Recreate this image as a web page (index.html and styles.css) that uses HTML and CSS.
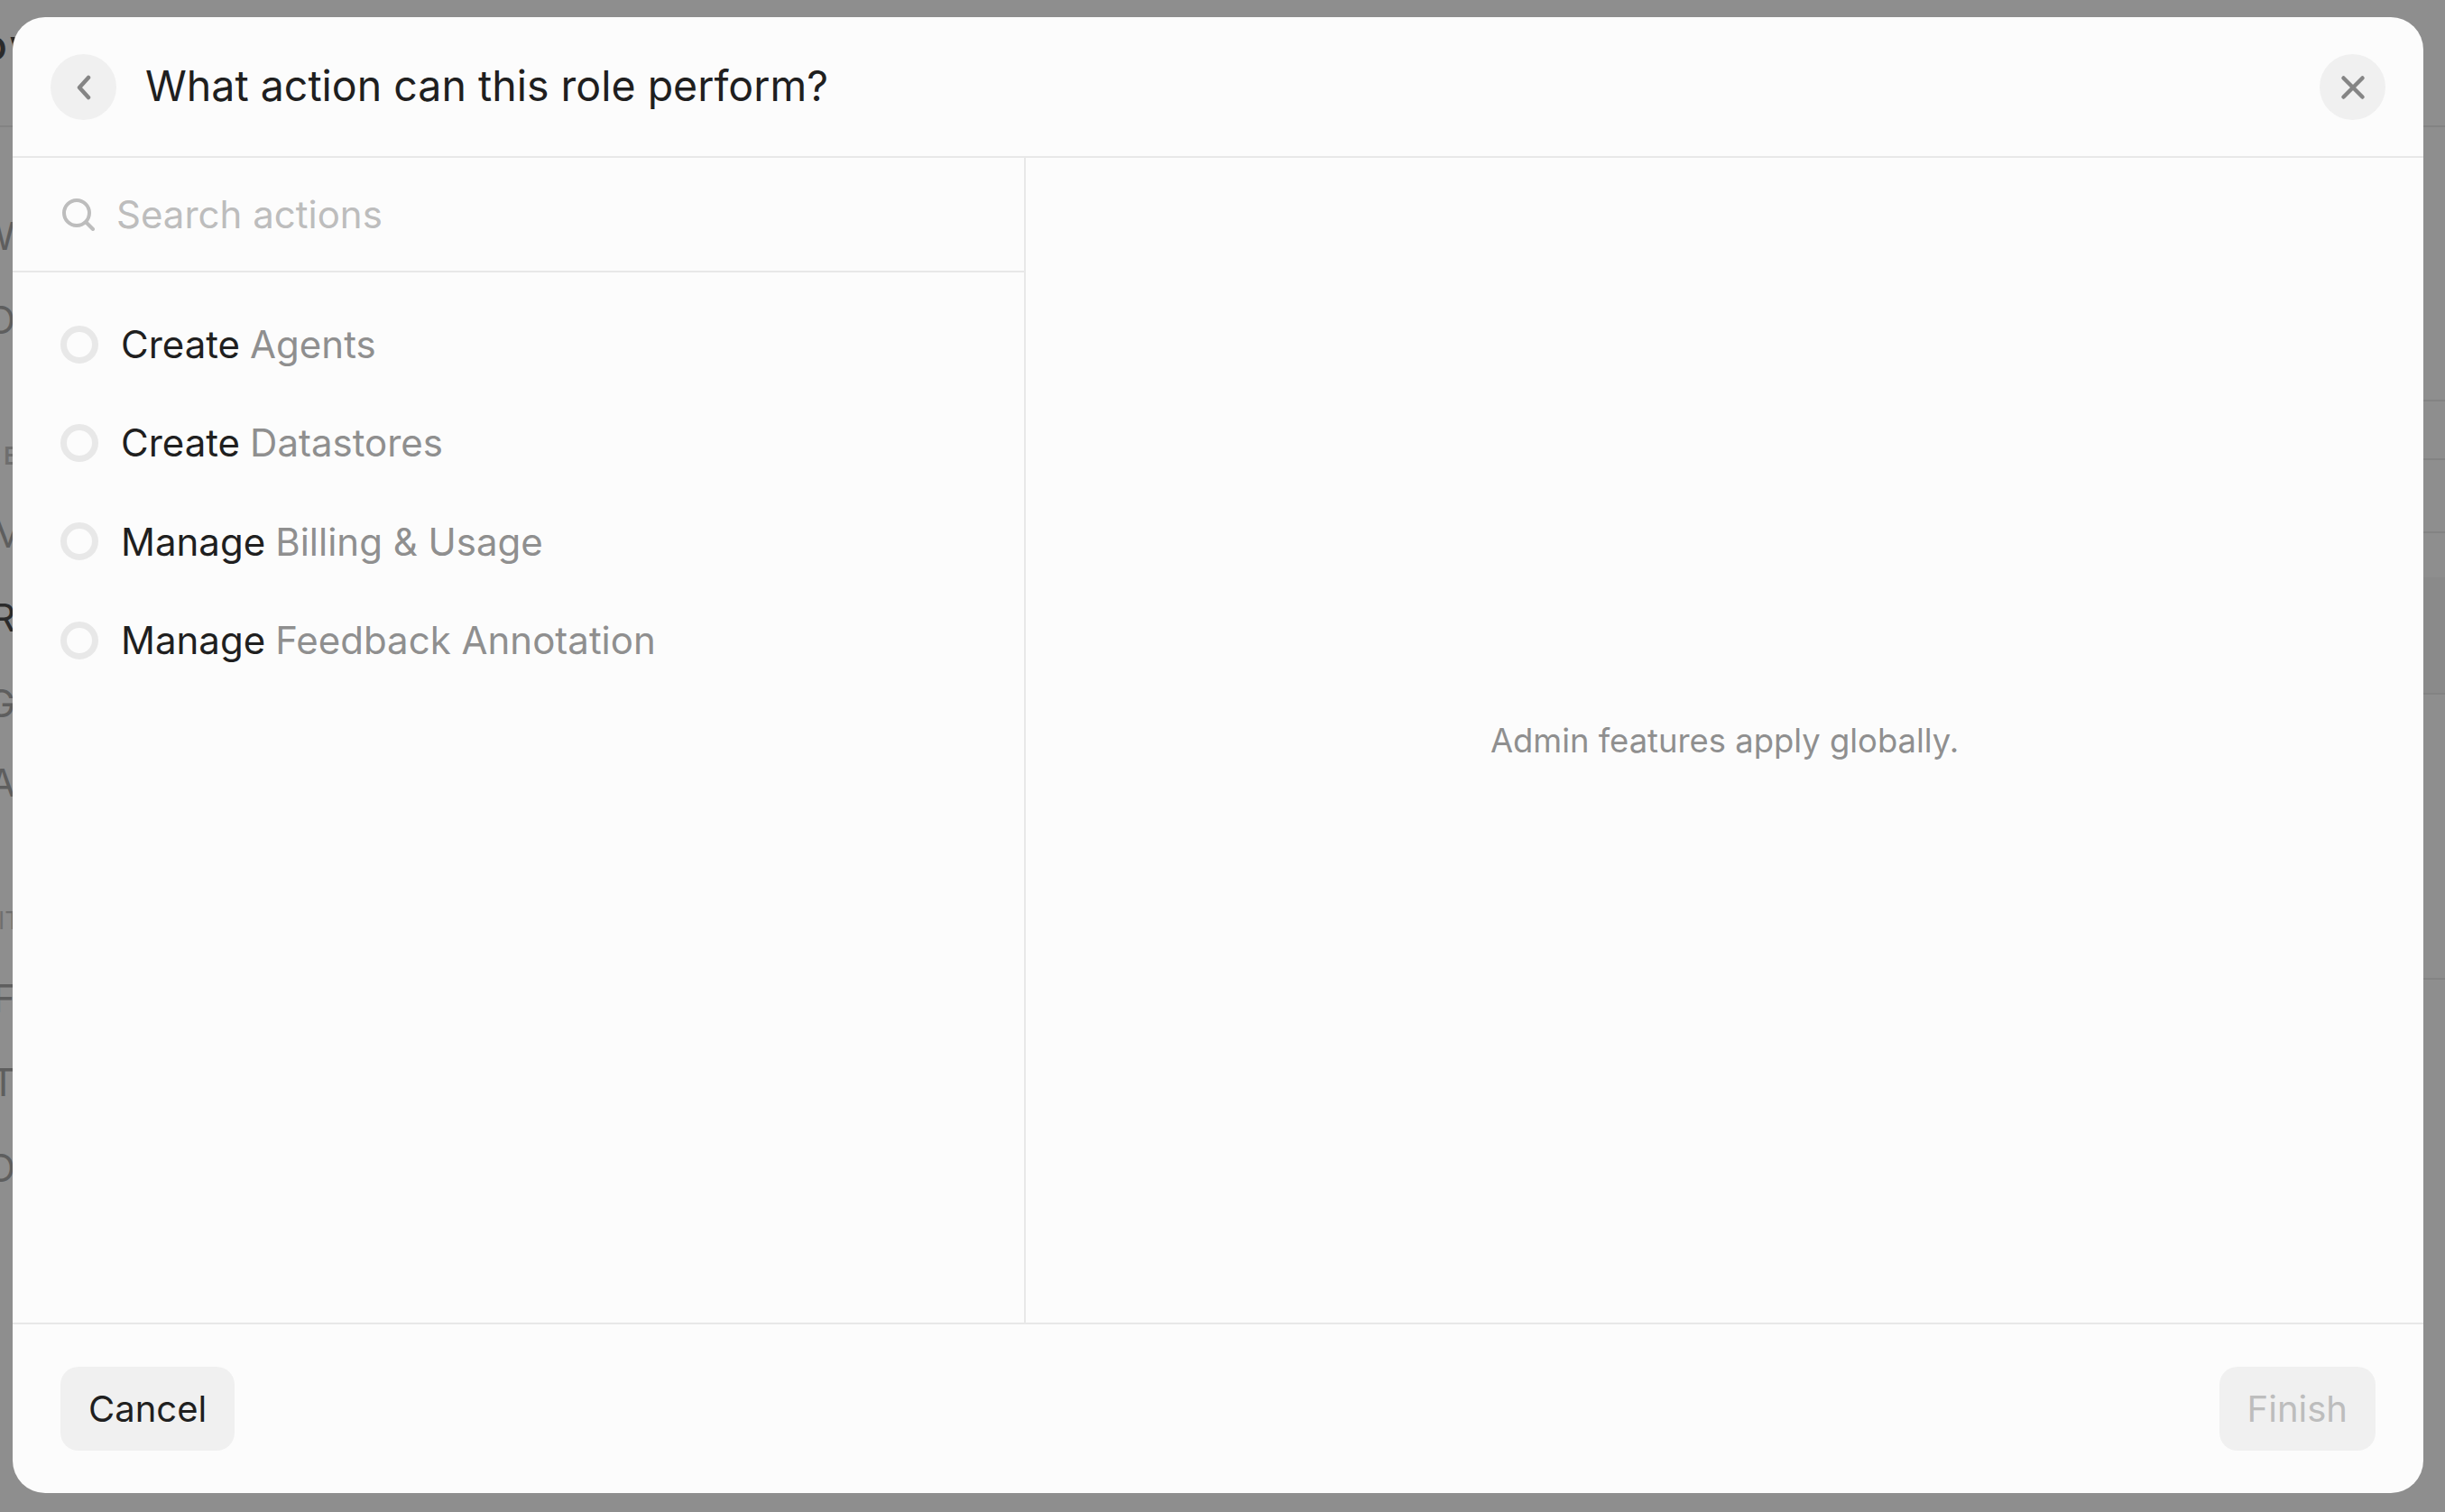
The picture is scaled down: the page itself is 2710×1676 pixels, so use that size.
FILE: index.html
```html
<!DOCTYPE html>
<html lang="en">
<head>
    <meta charset="UTF-8">
    <meta name="viewport" content="width=device-width, initial-scale=1.0">
    <title>What action can this role perform?</title>
    <link rel="stylesheet" href="styles.css">
</head>
<body>
    <!-- page behind the overlay, only the edges show -->
    <div class="backdrop">
        <span class="peek peek-title">ow</span>
        <span class="peek peek-w1">W</span>
        <span class="peek peek-d1">D</span>
        <span class="peek peek-small peek-e">E</span>
        <span class="peek peek-m">M</span>
        <span class="peek peek-r">R</span>
        <span class="peek peek-g">G</span>
        <span class="peek peek-a">A</span>
        <span class="peek peek-small peek-it">IT</span>
        <span class="peek peek-f">F</span>
        <span class="peek peek-t">T</span>
        <span class="peek peek-d2">D</span>
        <div class="peek-line peek-line-top"></div>
        <div class="peek-band"></div>
        <div class="peek-line peek-line-a"></div>
        <div class="peek-line peek-line-b"></div>
        <div class="peek-line peek-line-c"></div>
        <div class="peek-line peek-line-d"></div>
        <div class="peek-line peek-line-e"></div>
    </div>

    <div class="modal">
        <div class="modal-header">
            <button class="round-button">
                <svg width="28" height="28" viewBox="0 0 28 28" fill="none" stroke="#858585" stroke-width="4.5" stroke-linecap="round" stroke-linejoin="round"><path d="M19 3 L9 14 L19 25"/></svg>
            </button>
            <h1 class="modal-title">What action can this role perform?</h1>
            <button class="round-button close-button">
                <svg width="28" height="28" viewBox="0 0 28 28" fill="none" stroke="#858585" stroke-width="4.5" stroke-linecap="round"><path d="M3.5 3.5 L24.5 24.5 M24.5 3.5 L3.5 24.5"/></svg>
            </button>
        </div>

        <div class="modal-body">
            <div class="left-pane">
                <div class="search-row">
                    <svg class="search-icon" width="36" height="36" viewBox="0 0 36 36" fill="none" stroke="#bdbdbd" stroke-width="4" stroke-linecap="round"><circle cx="16" cy="16" r="14"/><path d="M27 27 L34 34"/></svg>
                    <span class="search-placeholder">Search actions</span>
                </div>
                <div class="action-list">
                    <div class="action-row">
                        <span class="radio"></span>
                        <span class="action-verb">Create</span>
                        <span class="action-target">Agents</span>
                    </div>
                    <div class="action-row">
                        <span class="radio"></span>
                        <span class="action-verb">Create</span>
                        <span class="action-target">Datastores</span>
                    </div>
                    <div class="action-row">
                        <span class="radio"></span>
                        <span class="action-verb">Manage</span>
                        <span class="action-target">Billing &amp; Usage</span>
                    </div>
                    <div class="action-row">
                        <span class="radio"></span>
                        <span class="action-verb">Manage</span>
                        <span class="action-target">Feedback Annotation</span>
                    </div>
                </div>
            </div>
            <div class="right-pane">
                <p class="empty-note">Admin features apply globally.</p>
            </div>
        </div>

        <div class="modal-footer">
            <button class="footer-button">Cancel</button>
            <button class="footer-button finish-button">Finish</button>
        </div>
    </div>
</body>
</html>
```

FILE: styles.css
```css
:root {
    --overlay: #8e8e8e;
    --surface: #fcfcfc;
    --border: #e8e8e8;
    --chip: #f0f0f0;
    --text: #1f1f1f;
    --muted: #8f8f8f;
    --faint: #bdbdbd;
}

* {
    box-sizing: border-box;
}

html, body {
    height: 100%;
}

body {
    margin: 0;
    padding: 19px 24px 21px 14px;
    height: 1676px;
    overflow: hidden;
    position: relative;
    font-family: Inter, "Liberation Sans", sans-serif;
    background-color: var(--overlay);
    color: var(--text);
}

button {
    font-family: inherit;
    border: none;
    cursor: pointer;
}

/* Page behind the overlay */
.backdrop {
    position: absolute;
    inset: 0;
    overflow: hidden;
}

.peek {
    position: absolute;
    right: calc(100% - 17px);
    font-size: 42px;
    line-height: 48px;
    color: #5e5e5e;
}

.peek-title {
    top: 22px;
    left: -21px;
    right: auto;
    font-size: 48px;
    line-height: 56px;
    font-weight: 500;
    letter-spacing: 3px;
    color: #2b2b2b;
}

.peek-small {
    right: auto;
    font-size: 27px;
    line-height: 32px;
    color: #6e6e6e;
}

.peek-w1 { top: 238px; }
.peek-d1 { top: 331px; }
.peek-e { top: 490px; left: 4px; font-weight: 600; }
.peek-m { top: 568px; right: calc(100% - 28px); }
.peek-r { top: 661px; color: #2b2b2b; }
.peek-g { top: 756px; }
.peek-a { top: 844px; }
.peek-it { top: 1005px; left: -2px; }
.peek-f { top: 1083px; }
.peek-t { top: 1176px; }
.peek-d2 { top: 1271px; }

.peek-line {
    position: absolute;
    right: 0;
    width: 24px;
    height: 2px;
    background-color: #838383;
}

.peek-line-top { top: 139px; width: 100%; }
.peek-line-a { top: 443px; }
.peek-line-b { top: 508px; }
.peek-line-c { top: 589px; }
.peek-line-d { top: 768px; }
.peek-line-e { top: 1084px; }

.peek-band {
    position: absolute;
    top: 640px;
    right: 0;
    width: 24px;
    height: 128px;
    background-color: #8a8a8a;
}

/* Dialog */
.modal {
    position: relative;
    display: flex;
    flex-direction: column;
    height: 100%;
    background-color: var(--surface);
    border-radius: 36px;
    overflow: hidden;
}

.modal-header {
    display: flex;
    align-items: center;
    height: 156px;
    padding: 1px 42px 0 42px;
    border-bottom: 2px solid var(--border);
}

.round-button {
    display: flex;
    align-items: center;
    justify-content: center;
    flex-shrink: 0;
    width: 73px;
    height: 73px;
    padding: 0;
    background-color: var(--chip);
    border-radius: 50%;
}

.modal-title {
    margin: 0 0 3px 32px;
    font-size: 46.5px;
    font-weight: 400;
    flex-grow: 1;
}

.modal-body {
    display: flex;
    flex-grow: 1;
    min-height: 0;
}

.left-pane {
    width: 1123px;
    flex-shrink: 0;
    border-right: 2px solid var(--border);
}

.search-row {
    display: flex;
    align-items: center;
    height: 127px;
    padding-left: 55px;
    border-bottom: 2px solid var(--border);
}

.search-icon {
    flex-shrink: 0;
}

.search-placeholder {
    margin-left: 24px;
    font-size: 42px;
    color: var(--faint);
}

.action-list {
    display: flex;
    flex-direction: column;
    padding-top: 52px;
    gap: 54.4px;
}

.action-row {
    display: flex;
    align-items: center;
    height: 55px;
    padding-left: 53px;
    font-size: 42px;
}

.radio {
    width: 42px;
    height: 42px;
    margin-right: 25px;
    border: 7px solid var(--border);
    border-radius: 50%;
    flex-shrink: 0;
}

.action-verb {
    margin-right: 11px;
}

.action-target {
    color: var(--muted);
}

.right-pane {
    flex-grow: 1;
    display: flex;
    justify-content: center;
    padding-top: 622px;
}

.empty-note {
    margin: 0;
    font-size: 36.4px;
    line-height: 48px;
    color: var(--muted);
}

.modal-footer {
    display: flex;
    align-items: center;
    justify-content: space-between;
    height: 189px;
    padding: 0 53px;
    border-top: 2px solid var(--border);
}

.footer-button {
    height: 93px;
    padding: 0 31px;
    font-size: 40px;
    color: var(--text);
    background-color: var(--chip);
    border-radius: 20px;
}

.finish-button {
    color: var(--faint);
}
```
